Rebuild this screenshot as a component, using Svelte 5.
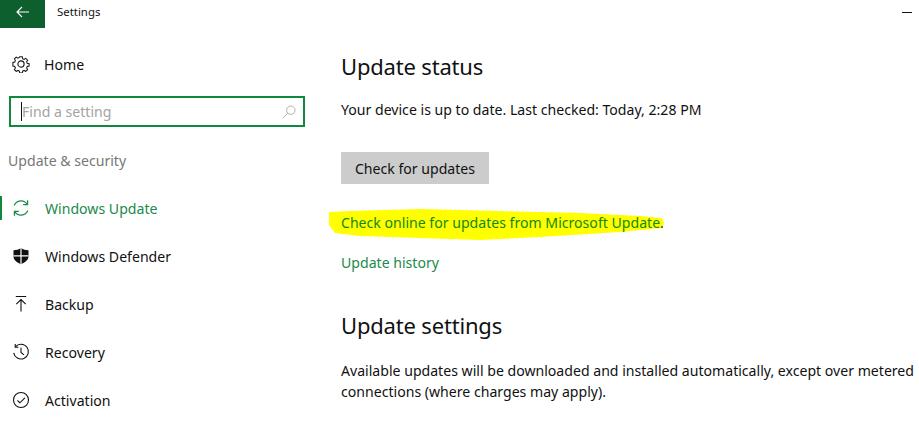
<script lang="ts">
  const navItems = [
    { label: "Windows Update", icon: "update", active: true },
    { label: "Windows Defender", icon: "shield" },
    { label: "Backup", icon: "backup" },
    { label: "Recovery", icon: "recovery" },
    { label: "Activation", icon: "activation" },
  ];
</script>

<div class="window">
  <header class="titlebar">
    <button class="back" aria-label="Back">
      <svg width="14" height="12" viewBox="0 0 14 12" fill="none" stroke="#fff" stroke-width="1.1">
        <path d="M13 6H1M6 1 1 6l5 5" />
      </svg>
    </button>
    <span class="title">Settings</span>
    <span class="minimize"></span>
  </header>

  <div class="body">
    <aside class="sidebar">
      <div class="home">
        <svg class="icon" width="18" height="18" viewBox="0 0 18 18" fill="none" stroke="#111" stroke-width="1.1">
          <circle cx="9" cy="9" r="3.1" />
          <path d="M7.6 1.2h2.8l.4 2.1 1.5.7 1.900-1.100 2 2-1.100 1.800.7 1.600 2 .4v2.600l-2 .4-.7 1.600 1.100 1.800-2 2-1.900-1.100-1.500.7-.4 2.100H7.600l-.4-2.100-1.500-.7-1.900 1.100-2-2 1.100-1.800-.7-1.600-2-.4V7.300l2-.4.7-1.600-1.100-1.800 2-2 1.900 1.100 1.500-.7z" transform="translate(.72 .72) scale(.92)" />
        </svg>
        <span>Home</span>
      </div>

      <div class="search">
        <span class="caret"></span>
        <span class="placeholder">Find a setting</span>
        <svg width="14" height="14" viewBox="0 0 14 14" fill="none" stroke="#b0b0b0" stroke-width="1">
          <circle cx="8.8" cy="5.2" r="4.2" />
          <path d="M5.8 8.2.8 13.2" />
        </svg>
      </div>

      <div class="section">Update &amp; security</div>

      <nav class="nav">
        {#each navItems as item}
          <div class="nav-item" class:active={item.active}>
            {#if item.icon === "update"}
              <svg class="icon" width="18" height="18" viewBox="0 0 18 18" fill="none" stroke="#1b8a4b" stroke-width="1.2">
                <path d="M2.200 6.400A7.300 7.300 0 0 1 15.200 5.400M15.800 11.600A7.300 7.300 0 0 1 2.800 12.600" />
                <path d="M15.600 1.200v4.500h-4.500M2.400 16.800v-4.500h4.500" />
              </svg>
            {:else if item.icon === "shield"}
              <svg class="icon" width="18" height="18" viewBox="0 0 18 18">
                <path fill="#111" d="M9 1c2.200 1.600 4.600 2.200 7.500 2.300v6.200C16.500 13 13 15.600 9 17.200 5 15.600 1.500 13 1.500 9.500V3.300C4.400 3.200 6.800 2.600 9 1z" />
                <path stroke="#fff" stroke-width="1.200" d="M9 1v16.200M1.500 8.800h15" />
              </svg>
            {:else if item.icon === "backup"}
              <svg class="icon" width="18" height="18" viewBox="0 0 18 18" fill="none" stroke="#111" stroke-width="1.1">
                <path d="M3.800 1.500h10.400M9 16.500V4.500M4.300 9.200 9 4.500l4.700 4.700" />
              </svg>
            {:else if item.icon === "recovery"}
              <svg class="icon" width="18" height="18" viewBox="0 0 18 18" fill="none" stroke="#111" stroke-width="1.1">
                <path d="M3.400 3.800A7.400 7.400 0 1 1 1.700 9.800" />
                <path d="M3.200 1v3.200h3.200M9 4.800v4.700l3 2.400" />
              </svg>
            {:else}
              <svg class="icon" width="18" height="18" viewBox="0 0 18 18" fill="none" stroke="#111" stroke-width="1.1">
                <circle cx="9" cy="9" r="7.500" />
                <path d="m5.500 9.500 2.400 2.300 5-5" />
              </svg>
            {/if}
            <span>{item.label}</span>
          </div>
        {/each}
      </nav>
    </aside>

    <main class="content">
      <h1>Update status</h1>
      <p class="status">Your device is up to date. Last checked: Today, 2:28 PM</p>
      <button class="check">Check for updates</button>

      <div class="online">
        <svg class="marker" width="340" height="34" viewBox="0 0 340 34">
          <path fill="#ffff00" d="M0 4 21 3 91 1 171 3 251 5 311 8 333 10 335 15 333 20 291 24 211 29 151 32 91 30 31 28 6 25 0 17z" />
        </svg>
        <a href="#online" class="link">Check online for updates from Microsoft Update</a><span class="dot">.</span>
      </div>

      <a href="#history" class="link history">Update history</a>

      <h1 class="settings">Update settings</h1>
      <p class="note">Available updates will be downloaded and installed automatically, except over metered connections (where charges may apply).</p>
    </main>
  </div>
</div>

<style>
  :global(body) {
    margin: 0;
    background: #fff;
    overflow: hidden;
  }

  .window {
    width: 919px;
    height: 423px;
    overflow: hidden;
    font-family: "Noto Sans", "Open Sans", sans-serif;
    font-size: 14.1px;
    color: #111;
  }

  .titlebar {
    display: flex;
    align-items: flex-start;
    height: 28px;
  }
  .back {
    width: 45px;
    height: 28px;
    padding: 0 0 4px;
    border: 0;
    background: #0e5f2e;
    display: flex;
    align-items: center;
    justify-content: center;
  }
  .title {
    margin-left: 12px;
    font-size: 11.4px;
    line-height: 24px;
  }
  .minimize {
    width: 10px;
    height: 1px;
    margin: 12px 7px 0 auto;
    background: #111;
  }

  .body {
    display: grid;
    grid-template-columns: 341px 1fr;
  }

  .sidebar {
    display: flex;
    flex-direction: column;
  }
  .icon {
    flex: none;
  }
  .home {
    display: flex;
    align-items: center;
    gap: 14px;
    height: 24px;
    margin: 24px 0 0 12px;
  }

  .search {
    display: flex;
    align-items: center;
    box-sizing: border-box;
    width: 296px;
    height: 31px;
    margin: 20px 0 0 9px;
    padding: 0 7px 0 10px;
    border: 2px solid #10893e;
  }
  .caret {
    width: 1px;
    height: 19px;
    background: #111;
  }
  .placeholder {
    flex: 1;
    padding-bottom: 1px;
    color: #a3a3a3;
  }

  .section {
    margin: 23px 0 0 8px;
    line-height: 22px;
    color: #777;
  }

  .nav {
    display: flex;
    flex-direction: column;
    margin-top: 12px;
  }
  .nav-item {
    display: flex;
    align-items: center;
    gap: 15px;
    height: 48px;
    padding-left: 12px;
  }
  .nav-item.active {
    color: #1b8a4b;
    position: relative;
  }
  .nav-item.active::before {
    content: "";
    position: absolute;
    left: 0;
    top: 12px;
    width: 2px;
    height: 24px;
    background: #10893e;
  }

  .content {
    padding-top: 20px;
  }
  h1 {
    margin: 0;
    font-size: 22px;
    font-weight: 400;
    letter-spacing: -0.18px;
    line-height: 36px;
  }
  .status {
    margin: 15px 0 0;
    line-height: 22px;
  }
  .check {
    display: block;
    width: 148px;
    height: 32px;
    margin-top: 31px;
    padding: 0;
    border: 0;
    background: #cccccc;
    color: #111;
    font: inherit;
  }

  .online {
    position: relative;
    margin-top: 28px;
    line-height: 22px;
  }
  .marker {
    position: absolute;
    left: -12px;
    top: -4px;
  }
  .link {
    position: relative;
    color: #1b8a4b;
    text-decoration: none;
  }
  .online .link {
    color: #108a10;
  }
  .dot {
    position: relative;
    color: #333;
  }
  .history {
    display: block;
    margin-top: 18px;
    line-height: 22px;
  }

  .settings {
    margin-top: 33px;
  }
  .note {
    margin: 17px 0 0;
    width: 578px;
    line-height: 21px;
  }
</style>
